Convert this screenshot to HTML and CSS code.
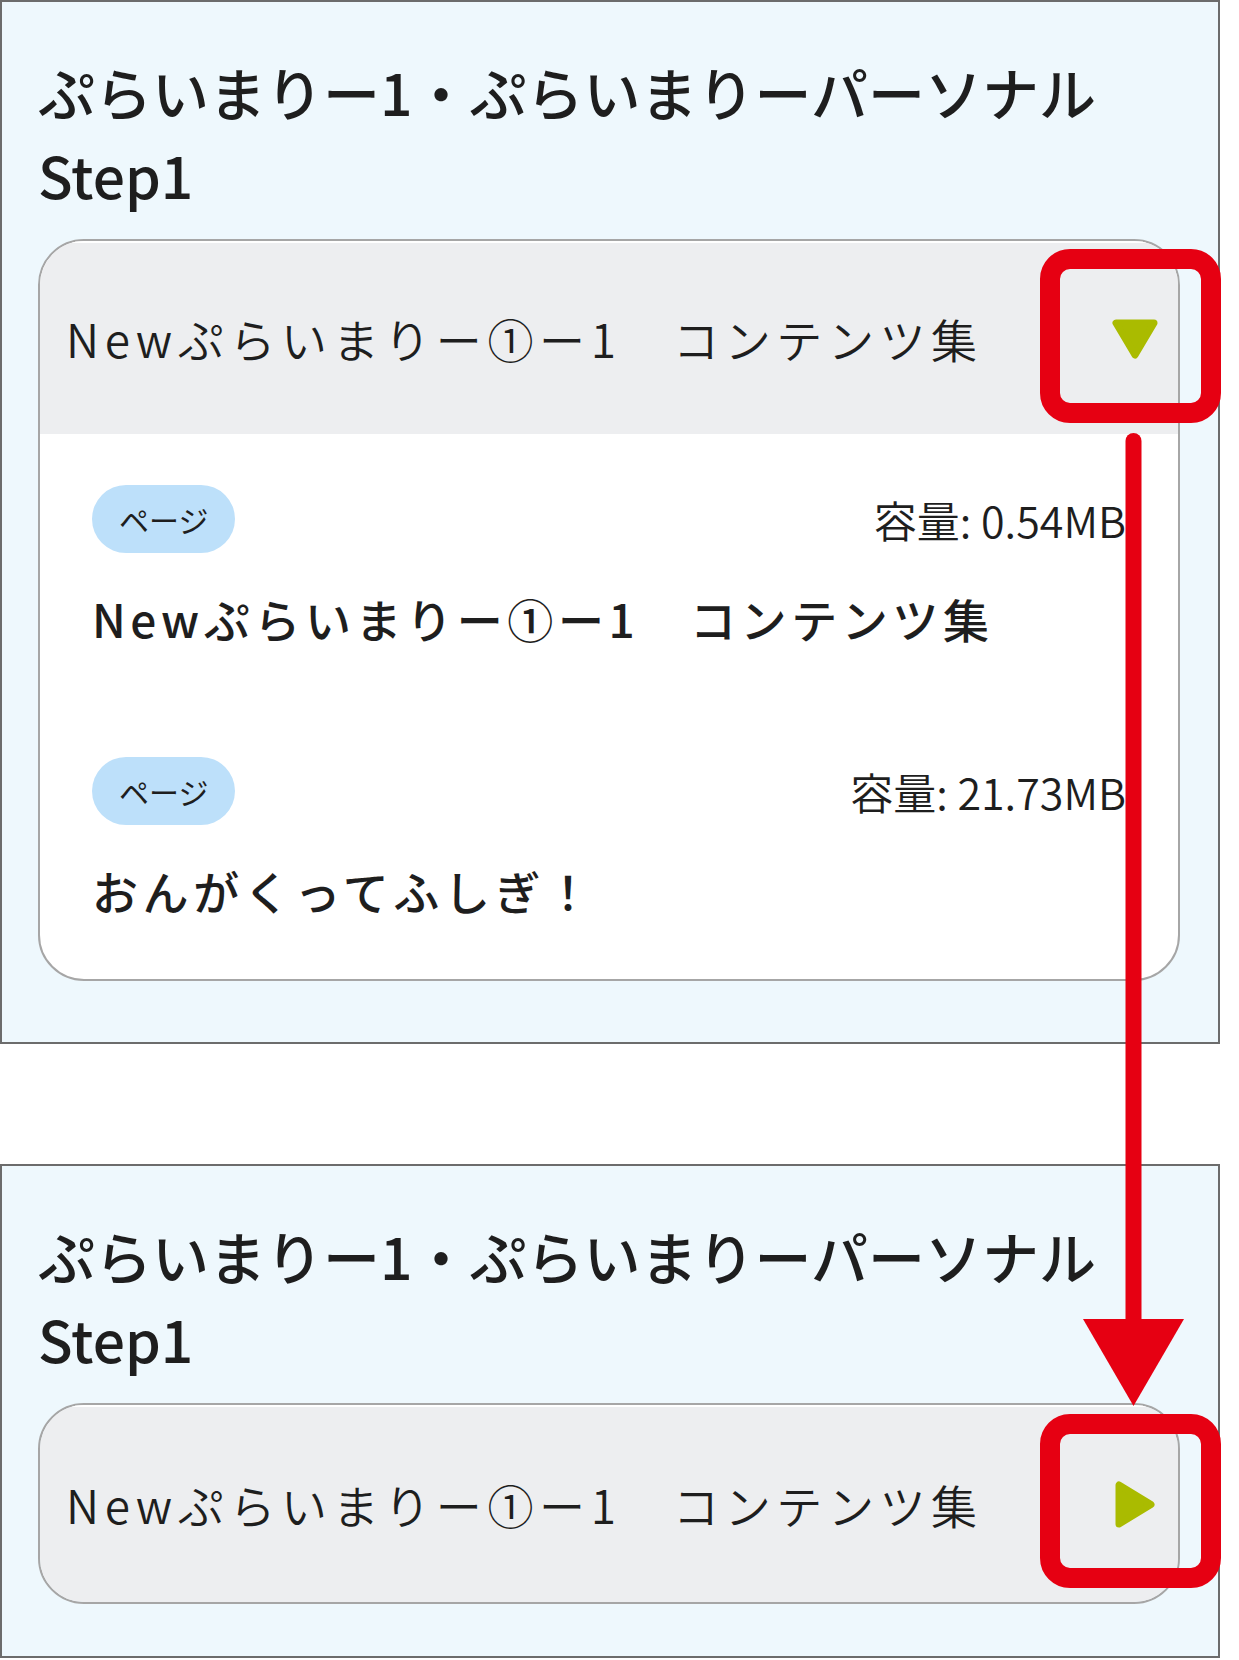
FILE: index.html
```html
<!DOCTYPE html>
<html lang="ja">
  <head>
    <meta charset="utf-8">
    <title>コンテンツ集</title>
    <link rel="stylesheet" href="styles.css">
  </head>
  <body>
    <div class="page">
      <section class="panel panel--open">
        <h2 class="step-title">ぷらいまりー1・ぷらいまりーパーソナル Step1</h2>
        <div class="accordion">
          <div class="accordion-head">
            <span class="accordion-label">Newぷらいまりー①ー1　コンテンツ集</span>
            <span class="toggle">
              <svg width="46" height="40" viewBox="0 0 46 40">
                <polygon points="4,4 42,4 23,36" fill="#aabb00" stroke="#aabb00" stroke-width="7" stroke-linejoin="round" />
              </svg>
            </span>
          </div>
          <ul class="item-list">
            <li class="item">
              <div class="item-meta">
                <span class="tag">ページ</span>
                <span class="size">容量: 0.54MB</span>
              </div>
              <p class="item-title">Newぷらいまりー①ー1　コンテンツ集</p>
            </li>
            <li class="item">
              <div class="item-meta">
                <span class="tag">ページ</span>
                <span class="size">容量: 21.73MB</span>
              </div>
              <p class="item-title">おんがくってふしぎ！</p>
            </li>
          </ul>
        </div>
      </section>

      <section class="panel">
        <h2 class="step-title">ぷらいまりー1・ぷらいまりーパーソナル Step1</h2>
        <div class="accordion accordion--closed">
          <div class="accordion-head">
            <span class="accordion-label">Newぷらいまりー①ー1　コンテンツ集</span>
            <span class="toggle">
              <svg width="40" height="47" viewBox="0 0 40 47">
                <polygon points="4,4 4,43 36,23.5" fill="#aabb00" stroke="#aabb00" stroke-width="7" stroke-linejoin="round" />
              </svg>
            </span>
          </div>
        </div>
      </section>

      <!-- red annotation: toggle before / after -->
      <div class="callout callout--open"></div>
      <div class="callout callout--closed"></div>
      <svg class="arrow" width="106" height="980" viewBox="0 0 106 980">
        <line x1="53.5" y1="11" x2="53.5" y2="892" stroke="#e60012" stroke-width="16" stroke-linecap="round" />
        <polygon points="3,889 104,889 53.5,976" fill="#e60012" />
      </svg>
    </div>
  </body>
</html>
```

FILE: styles.css
```css
body {
  margin: 0;
  background-color: #ffffff;
  font-family: "Noto Sans CJK JP", "Noto Sans", sans-serif;
  color: #1e1e1e;
}

.page {
  position: relative;
  width: 1239px;
  height: 1660px;
}

.panel {
  width: 1220px;
  box-sizing: border-box;
  border: 2px solid #6c6c6c;
  background-color: #eef8fd;
  padding: 48px 38px 52px 36px;
}

.panel--open {
  padding-bottom: 61px;
}

.panel + .panel {
  margin-top: 120px;
}

.step-title {
  margin: 0;
  font-size: 57px;
  line-height: 83px;
  font-weight: 500;
  color: #1e1e1e;
}

.accordion {
  margin-top: 23px;
  border: 2px solid #a6a6a6;
  border-radius: 46px;
  background-color: #ffffff;
  overflow: hidden;
}

.accordion-head {
  display: flex;
  align-items: center;
  justify-content: space-between;
  background-color: #edeef0;
  border-top: 2px solid #ffffff;
  padding: 61px 19px 61px 26px;
}

.accordion--closed .accordion-head {
  padding-top: 63px;
  padding-bottom: 63px;
}

.accordion-label {
  font-size: 46px;
  line-height: 69px;
  font-weight: 350;
  letter-spacing: 5.6px;
  color: #1e1e1e;
}

.toggle {
  width: 48px;
  height: 48px;
  display: flex;
  align-items: center;
  justify-content: center;
}

.item-list {
  list-style: none;
  margin: 0;
  padding: 0 0 1px;
}

.item {
  padding: 51px 52px 53px;
}

.item-meta {
  display: flex;
  align-items: center;
  justify-content: space-between;
}

.tag {
  background-color: #bde0fa;
  border-radius: 34px;
  padding: 12px 27px;
  font-size: 30px;
  line-height: 44px;
  color: #1e1e1e;
}

.size {
  font-size: 43px;
  line-height: 60px;
  font-weight: 350;
  color: #1e1e1e;
}

.item-title {
  margin: 31px 0 0;
  font-size: 46px;
  line-height: 69px;
  font-weight: 500;
  letter-spacing: 0.1em;
}

.callout {
  position: absolute;
  left: 1040px;
  width: 181px;
  height: 174px;
  box-sizing: border-box;
  border: 20px solid #e60012;
  border-radius: 30px;
}

.callout--open {
  top: 249px;
}

.callout--closed {
  top: 1414px;
}

.arrow {
  position: absolute;
  left: 1080px;
  top: 430px;
}
```
